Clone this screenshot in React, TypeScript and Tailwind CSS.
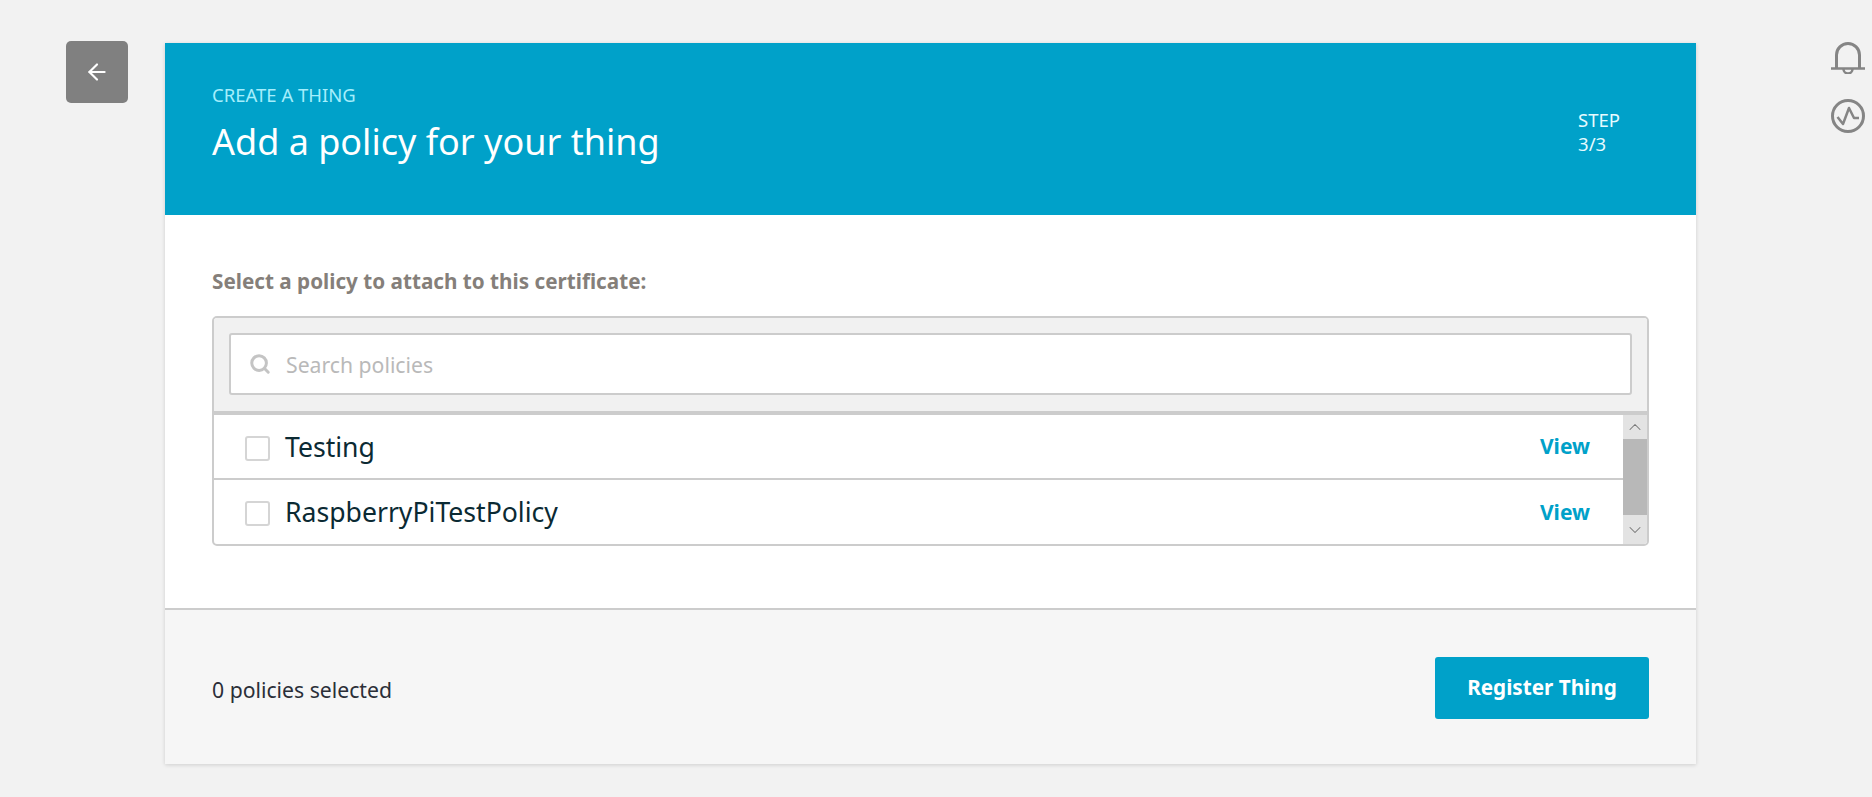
import { ArrowLeft, Search, ChevronUp, ChevronDown } from "lucide-react";

const POLICIES = ["Testing", "RaspberryPiTestPolicy"];

function PolicyRow({ name, last }: { name: string; last?: boolean }) {
  return (
    <div
      className={`flex items-center pl-[31px] pr-[33px] ${
        last ? "h-[64px]" : "h-[65px] border-b-2 border-[#cccccc]"
      }`}
    >
      <span className="mt-[3px] h-[25px] w-[25px] shrink-0 rounded-[3px] border-2 border-[#d5d5d5] bg-white" />
      <span className="ml-[15px] mt-[1px] flex-1 text-[26.6px] leading-none text-[#0b2a33]">
        {name}
      </span>
      <a className="mt-[1px] text-[21px] font-bold text-[#00a1c9]">View</a>
    </div>
  );
}

function PolicyPicker() {
  return (
    <div className="overflow-hidden rounded-[5px] border-2 border-[#cccccc]">
      <div className="border-b-4 border-[#cccccc] bg-[#f1f1f1] px-[15px] pb-[16px] pt-[15px]">
        <div className="flex h-[62px] items-center rounded-[3px] border-2 border-[#cccccc] bg-white pl-[18px]">
          <Search size={22} strokeWidth={3.25} className="text-[#c4c4c4]" />
          <span className="ml-[15px] pt-[2px] text-[21.2px] text-[#b9b9b9]">
            Search policies
          </span>
        </div>
      </div>
      <div className="flex">
        <div className="flex-1">
          {POLICIES.map((name, i) => (
            <PolicyRow
              key={name}
              name={name}
              last={i === POLICIES.length - 1}
            />
          ))}
        </div>
        <div className="flex w-[24px] flex-col bg-[#e3e3e3] text-[#777777]">
          <div className="flex h-[24px] items-center justify-center">
            <ChevronUp size={20} strokeWidth={1.25} />
          </div>
          <div className="h-[76px] bg-[#b8b8b8]" />
          <div className="flex flex-1 items-center justify-center">
            <ChevronDown size={20} strokeWidth={1.25} />
          </div>
        </div>
      </div>
    </div>
  );
}

export default function App() {
  return (
    <div
      className="flex h-[797px] overflow-hidden bg-[#f2f2f2]"
      style={{ fontFamily: '"Noto Sans", "Open Sans", sans-serif' }}
    >
      <div className="w-[165px] shrink-0 pl-[66px] pt-[41px]">
        <button
          type="button"
          className="flex h-[62px] w-[62px] items-center justify-center rounded-[5px] bg-[#808080] text-white"
        >
          <ArrowLeft size={26} strokeWidth={2} />
        </button>
      </div>

      <main className="mt-[43px] h-[721px] w-[1531px] shrink-0 bg-white shadow-[0_1px_4px_rgba(0,0,0,0.15)]">
        <header className="flex h-[172px] justify-between bg-[#00a1c9] pl-[47px] pr-[76px]">
          <div className="pt-[40px]">
            <p className="text-[18.5px] uppercase leading-[24px] text-[#a5eefc]">
              Create a thing
            </p>
            <h1 className="mt-[11px] text-[36px] font-normal leading-[48px] text-white">
              Add a policy for your thing
            </h1>
          </div>
          <div className="pt-[65px] text-[18.5px] leading-[24px] text-[#e6fbff]">
            <p>STEP</p>
            <p>3/3</p>
          </div>
        </header>

        <section className="h-[393px] px-[47px] pt-[52px]">
          <h2 className="mb-[21px] text-[20.7px] font-bold leading-[28px] text-[#857f7a]">
            Select a policy to attach to this certificate:
          </h2>
          <PolicyPicker />
        </section>

        <footer className="flex h-[156px] items-center justify-between border-t-2 border-[#cccccc] bg-[#f6f6f6] px-[47px] pt-[2px]">
          <span className="mt-[3px] text-[21.2px] text-[#2b2f38]">
            0 policies selected
          </span>
          <button
            type="button"
            className="h-[62px] w-[214px] rounded-[3px] bg-[#00a1c9] text-[20.7px] font-bold text-white"
          >
            Register Thing
          </button>
        </footer>
      </main>

      <aside className="flex flex-1 flex-col items-end gap-[25px] pr-[7px] pt-[42px] text-[#858585]">
        <svg width="34" height="32" viewBox="0 0 34 32" fill="none" stroke="currentColor" strokeWidth="3">
          <path d="M5.5 26V13a11.5 11.5 0 0 1 23 0v13" />
          <path d="M0 26.5h34" strokeWidth="2.5" />
          <path d="M12.5 27a4.5 4.5 0 0 0 9 0" strokeWidth="2.5" />
        </svg>
        <svg width="34" height="34" viewBox="0 0 34 34" fill="none" stroke="currentColor" strokeWidth="3">
          <circle cx="17" cy="17" r="15.5" />
          <path d="M6.5 18l5.5 7 6-16 5 10h5" strokeWidth="2.5" strokeLinejoin="round" />
        </svg>
      </aside>
    </div>
  );
}
